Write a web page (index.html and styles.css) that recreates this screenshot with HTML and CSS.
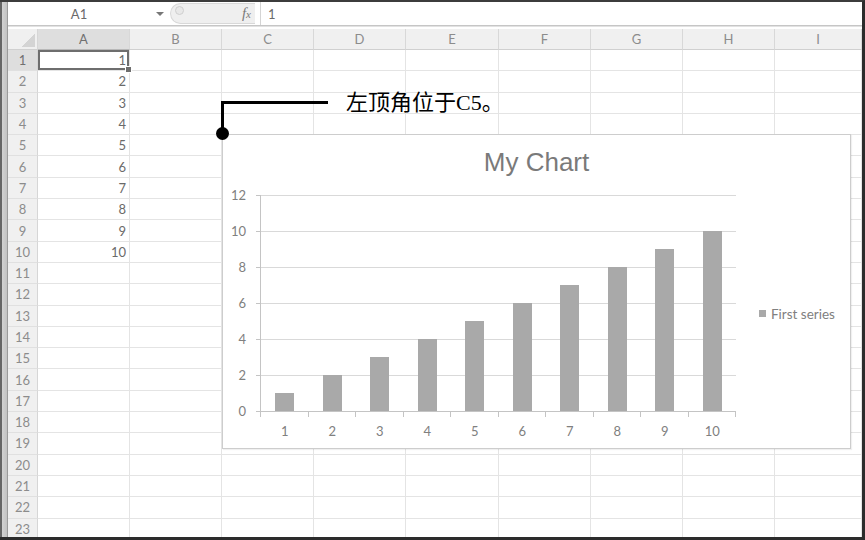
FILE: index.html
```html
<!DOCTYPE html>
<html>
<head>
<meta charset="utf-8">
<link rel="stylesheet" href="styles.css">
</head>
<body>
<div class="app">
  <div class="edge"></div>
  <div class="main">
    <div class="formula">
      <div class="namebox"><span class="name">A1</span><span class="caret"></span></div>
      <div class="pill"><span class="knob"></span><span class="fx">f<span class="fxx">x</span></span></div>
      <div class="fsep"></div>
      <div class="fval">1</div>
    </div>
    <div class="fgap"></div>
    <div class="sheet">
      <div class="row head"><div class="corner"><span class="tri"></span></div><div class="ch on">A</div><div class="ch">B</div><div class="ch">C</div><div class="ch">D</div><div class="ch">E</div><div class="ch">F</div><div class="ch">G</div><div class="ch">H</div><div class="ch">I</div></div>
      <div class="row"><div class="rh on">1</div><div class="c sel">1</div><div class="c"></div><div class="c"></div><div class="c"></div><div class="c"></div><div class="c"></div><div class="c"></div><div class="c"></div><div class="c"></div></div>
      <div class="row"><div class="rh">2</div><div class="c">2</div><div class="c"></div><div class="c"></div><div class="c"></div><div class="c"></div><div class="c"></div><div class="c"></div><div class="c"></div><div class="c"></div></div>
      <div class="row"><div class="rh">3</div><div class="c">3</div><div class="c"></div><div class="c"></div><div class="c"></div><div class="c"></div><div class="c"></div><div class="c"></div><div class="c"></div><div class="c"></div></div>
      <div class="row"><div class="rh">4</div><div class="c">4</div><div class="c"></div><div class="c"></div><div class="c"></div><div class="c"></div><div class="c"></div><div class="c"></div><div class="c"></div><div class="c"></div></div>
      <div class="row"><div class="rh">5</div><div class="c">5</div><div class="c"></div><div class="c"></div><div class="c"></div><div class="c"></div><div class="c"></div><div class="c"></div><div class="c"></div><div class="c"></div></div>
      <div class="row"><div class="rh">6</div><div class="c">6</div><div class="c"></div><div class="c"></div><div class="c"></div><div class="c"></div><div class="c"></div><div class="c"></div><div class="c"></div><div class="c"></div></div>
      <div class="row"><div class="rh">7</div><div class="c">7</div><div class="c"></div><div class="c"></div><div class="c"></div><div class="c"></div><div class="c"></div><div class="c"></div><div class="c"></div><div class="c"></div></div>
      <div class="row"><div class="rh">8</div><div class="c">8</div><div class="c"></div><div class="c"></div><div class="c"></div><div class="c"></div><div class="c"></div><div class="c"></div><div class="c"></div><div class="c"></div></div>
      <div class="row"><div class="rh">9</div><div class="c">9</div><div class="c"></div><div class="c"></div><div class="c"></div><div class="c"></div><div class="c"></div><div class="c"></div><div class="c"></div><div class="c"></div></div>
      <div class="row"><div class="rh">10</div><div class="c">10</div><div class="c"></div><div class="c"></div><div class="c"></div><div class="c"></div><div class="c"></div><div class="c"></div><div class="c"></div><div class="c"></div></div>
      <div class="row"><div class="rh">11</div><div class="c"></div><div class="c"></div><div class="c"></div><div class="c"></div><div class="c"></div><div class="c"></div><div class="c"></div><div class="c"></div><div class="c"></div></div>
      <div class="row"><div class="rh">12</div><div class="c"></div><div class="c"></div><div class="c"></div><div class="c"></div><div class="c"></div><div class="c"></div><div class="c"></div><div class="c"></div><div class="c"></div></div>
      <div class="row"><div class="rh">13</div><div class="c"></div><div class="c"></div><div class="c"></div><div class="c"></div><div class="c"></div><div class="c"></div><div class="c"></div><div class="c"></div><div class="c"></div></div>
      <div class="row"><div class="rh">14</div><div class="c"></div><div class="c"></div><div class="c"></div><div class="c"></div><div class="c"></div><div class="c"></div><div class="c"></div><div class="c"></div><div class="c"></div></div>
      <div class="row"><div class="rh">15</div><div class="c"></div><div class="c"></div><div class="c"></div><div class="c"></div><div class="c"></div><div class="c"></div><div class="c"></div><div class="c"></div><div class="c"></div></div>
      <div class="row"><div class="rh">16</div><div class="c"></div><div class="c"></div><div class="c"></div><div class="c"></div><div class="c"></div><div class="c"></div><div class="c"></div><div class="c"></div><div class="c"></div></div>
      <div class="row"><div class="rh">17</div><div class="c"></div><div class="c"></div><div class="c"></div><div class="c"></div><div class="c"></div><div class="c"></div><div class="c"></div><div class="c"></div><div class="c"></div></div>
      <div class="row"><div class="rh">18</div><div class="c"></div><div class="c"></div><div class="c"></div><div class="c"></div><div class="c"></div><div class="c"></div><div class="c"></div><div class="c"></div><div class="c"></div></div>
      <div class="row"><div class="rh">19</div><div class="c"></div><div class="c"></div><div class="c"></div><div class="c"></div><div class="c"></div><div class="c"></div><div class="c"></div><div class="c"></div><div class="c"></div></div>
      <div class="row"><div class="rh">20</div><div class="c"></div><div class="c"></div><div class="c"></div><div class="c"></div><div class="c"></div><div class="c"></div><div class="c"></div><div class="c"></div><div class="c"></div></div>
      <div class="row"><div class="rh">21</div><div class="c"></div><div class="c"></div><div class="c"></div><div class="c"></div><div class="c"></div><div class="c"></div><div class="c"></div><div class="c"></div><div class="c"></div></div>
      <div class="row"><div class="rh">22</div><div class="c"></div><div class="c"></div><div class="c"></div><div class="c"></div><div class="c"></div><div class="c"></div><div class="c"></div><div class="c"></div><div class="c"></div></div>
      <div class="row"><div class="rh">23</div><div class="c"></div><div class="c"></div><div class="c"></div><div class="c"></div><div class="c"></div><div class="c"></div><div class="c"></div><div class="c"></div><div class="c"></div></div>
    </div>
  </div>

  <div class="chart">
    <div class="chart-title">My Chart</div>
    <div class="chart-body">
      <div class="yaxis">
        <div class="ylab">12</div>
        <div class="ylab">10</div>
        <div class="ylab">8</div>
        <div class="ylab">6</div>
        <div class="ylab">4</div>
        <div class="ylab">2</div>
        <div class="ylab">0</div>
      </div>
      <div class="plot">
        <div class="cat"><div class="bar" style="height:18px"></div></div>
        <div class="cat"><div class="bar" style="height:36px"></div></div>
        <div class="cat"><div class="bar" style="height:54px"></div></div>
        <div class="cat"><div class="bar" style="height:72px"></div></div>
        <div class="cat"><div class="bar" style="height:90px"></div></div>
        <div class="cat"><div class="bar" style="height:108px"></div></div>
        <div class="cat"><div class="bar" style="height:126px"></div></div>
        <div class="cat"><div class="bar" style="height:144px"></div></div>
        <div class="cat"><div class="bar" style="height:162px"></div></div>
        <div class="cat"><div class="bar" style="height:180px"></div></div>
      </div>
      <div class="legend"><span class="swatch"></span><span>First series</span></div>
      <div class="xaxis">
        <div class="xlab">1</div>
        <div class="xlab">2</div>
        <div class="xlab">3</div>
        <div class="xlab">4</div>
        <div class="xlab">5</div>
        <div class="xlab">6</div>
        <div class="xlab">7</div>
        <div class="xlab">8</div>
        <div class="xlab">9</div>
        <div class="xlab">10</div>
      </div>
    </div>
  </div>

  <div class="callout"></div>
  <div class="callout-text">左顶角位于C5。</div>
</div>
</body>
</html>
```
FILE: styles.css
```css
body {
  margin: 0;
  background: #fff;
}

.app {
  position: relative;
  width: 865px;
  height: 540px;
  box-sizing: border-box;
  border-top: 2px solid #3c3c3c;
  border-right: 3px solid #2c2c2c;
  border-bottom: 3px solid #2c2c2c;
  display: flex;
  overflow: hidden;
  font-family: "Lato", "Liberation Sans", sans-serif;
  background: #fff;
}

.edge {
  width: 8px;
  flex: none;
  background: linear-gradient(to right, #666 0, #666 2px, #d2d2d2 2px, #c2c2c2 7px, #9a9a9a 7px);
}

.main {
  flex: 1;
  min-width: 0;
  display: flex;
  flex-direction: column;
  overflow: hidden;
}

/* formula bar */
.formula {
  height: 23px;
  flex: none;
  border-bottom: 1px solid #c6c6c6;
  display: flex;
  font-size: 13px;
  color: #6a6a6a;
}

.namebox {
  width: 162px;
  flex: none;
  display: flex;
  align-items: center;
}

.name {
  flex: 1;
  text-align: center;
}

.caret {
  width: 20px;
  display: flex;
  justify-content: center;
}

.caret::before {
  content: "";
  border-left: 4px solid transparent;
  border-right: 4px solid transparent;
  border-top: 4px solid #777;
}

.pill {
  width: 85px;
  height: 21px;
  margin-top: 1px;
  box-sizing: border-box;
  background: #efefef;
  border: 1px solid #d8d8d8;
  border-right: none;
  border-radius: 11px 0 0 11px;
  display: flex;
  align-items: center;
}

.knob {
  width: 7px;
  height: 7px;
  margin-left: 4px;
  border-radius: 50%;
  border: 1px solid #cfcfcf;
  background: #e8e8e8;
  margin-top: -6px;
}

.fx {
  margin-left: auto;
  padding-right: 4px;
  font-family: "Liberation Serif", serif;
  font-style: italic;
  font-size: 15px;
  color: #7a7a7a;
}

.fxx {
  font-size: 11px;
}

.fsep {
  width: 1px;
  background: #d4d4d4;
  margin-left: 5px;
}

.fval {
  padding-left: 7px;
  display: flex;
  align-items: center;
}

.fgap {
  height: 2px;
  flex: none;
  border-top: 1px solid #e2e2e2;
}

/* sheet */
.sheet {
  flex: 1;
  overflow: hidden;
}

.row {
  display: grid;
  grid-template-columns: 30px 92px 92px 92px 92px 93px 92px 92px 92px 87px;
  height: 21.3px;
}

.row.head {
  height: 21px;
}

.corner {
  background: #f0f0f0;
  border-right: 1px solid #d6d6d6;
  border-bottom: 1px solid #d0d0d0;
  box-sizing: border-box;
  display: flex;
  align-items: flex-end;
  justify-content: flex-end;
  padding: 0 2px 2px 0;
}

.tri {
  width: 14px;
  height: 14px;
  background: linear-gradient(to bottom right, transparent 50%, #d4d4d4 50%);
}

.ch {
  background: #f0f0f0;
  border-right: 1px solid #d8d8d8;
  border-bottom: 1px solid #d0d0d0;
  box-sizing: border-box;
  display: flex;
  align-items: center;
  justify-content: center;
  font-size: 13px;
  color: #8c8c8c;
}

.ch.on {
  background: #dedede;
  color: #707070;
  border-bottom-color: #b8b8b8;
}

.rh {
  background: #f0f0f0;
  border-right: 1px solid #d6d6d6;
  border-bottom: 1px solid #e0e0e0;
  box-sizing: border-box;
  display: flex;
  align-items: center;
  justify-content: center;
  font-size: 13px;
  color: #8c8c8c;
}

.rh.on {
  background: #dedede;
  color: #707070;
}

.c {
  border-right: 1px solid #e4e4e4;
  border-bottom: 1px solid #e4e4e4;
  box-sizing: border-box;
  display: flex;
  align-items: center;
  justify-content: flex-end;
  padding-right: 3px;
  font-size: 13px;
  color: #6a6a6a;
}

.c.sel {
  position: relative;
  box-shadow: inset 0 0 0 2px #6e6e6e;
}

.c.sel::after {
  content: "";
  position: absolute;
  right: -3px;
  bottom: -3px;
  width: 5px;
  height: 5px;
  background: #6e6e6e;
  border: 1px solid #fff;
}

/* chart */
.chart {
  position: absolute;
  left: 222px;
  top: 132px;
  width: 629px;
  height: 315px;
  box-sizing: border-box;
  border: 1px solid #cdcdcd;
  background: #fff;
  box-shadow: 1px 1px 1px rgba(0, 0, 0, 0.06);
  color: #808080;
}

.chart-title {
  margin-top: 12px;
  height: 30px;
  line-height: 30px;
  text-align: center;
  font-family: "Liberation Sans", sans-serif;
  font-size: 26px;
  color: #7a7a7a;
}

.chart-body {
  margin-top: 18px;
  display: grid;
  grid-template-columns: 37px 476px 1fr;
  grid-template-rows: 217px auto;
}

.yaxis {
  grid-column: 1;
  grid-row: 1;
  align-self: start;
  margin-top: -18px;
  display: flex;
  flex-direction: column;
}

.ylab {
  height: 36px;
  display: flex;
  align-items: center;
  justify-content: flex-end;
  font-size: 13px;
}

.ylab::after {
  content: "";
  align-self: flex-start;
  margin-top: 18px;
  width: 4px;
  height: 1px;
  margin-left: 10px;
  background: #c4c4c4;
}

.plot {
  grid-column: 2;
  grid-row: 1;
  height: 216px;
  border-left: 1px solid #c4c4c4;
  border-bottom: 1px solid #c4c4c4;
  background: repeating-linear-gradient(to bottom, #d9d9d9 0, #d9d9d9 1px, transparent 1px, transparent 36px);
  display: flex;
}

.cat {
  flex: 1;
  display: flex;
  justify-content: center;
  align-items: flex-end;
}

.bar {
  width: 19px;
  background: #a9a9a9;
}

.legend {
  grid-column: 3;
  grid-row: 1;
  align-self: center;
  margin-top: 20px;
  padding-left: 23px;
  display: flex;
  align-items: center;
  gap: 5px;
  font-size: 13.5px;
}

.swatch {
  width: 7px;
  height: 7px;
  background: #a9a9a9;
}

.xaxis {
  grid-column: 2;
  grid-row: 2;
  display: flex;
}

.xaxis::before {
  content: "";
  flex: none;
  width: 1px;
  height: 5px;
  background: #c4c4c4;
}

.xlab {
  flex: 1;
  display: flex;
  flex-direction: column;
  align-items: center;
  font-size: 13px;
  line-height: 28px;
}

.xlab::before {
  content: "";
  align-self: flex-end;
  width: 1px;
  height: 5px;
  background: #c4c4c4;
}

/* callout */
.callout {
  position: absolute;
  left: 221px;
  top: 99px;
  width: 107px;
  height: 33px;
  box-sizing: border-box;
  border-top: 3px solid #000;
  border-left: 3px solid #000;
}

.callout::after {
  content: "";
  position: absolute;
  left: -8px;
  top: 23px;
  width: 13px;
  height: 13px;
  border-radius: 50%;
  background: #000;
}

.callout-text {
  position: absolute;
  left: 346px;
  top: 86px;
  font-family: "Liberation Serif", "Noto Sans CJK SC", serif;
  font-size: 22px;
  line-height: 30px;
  color: #000;
}
```
